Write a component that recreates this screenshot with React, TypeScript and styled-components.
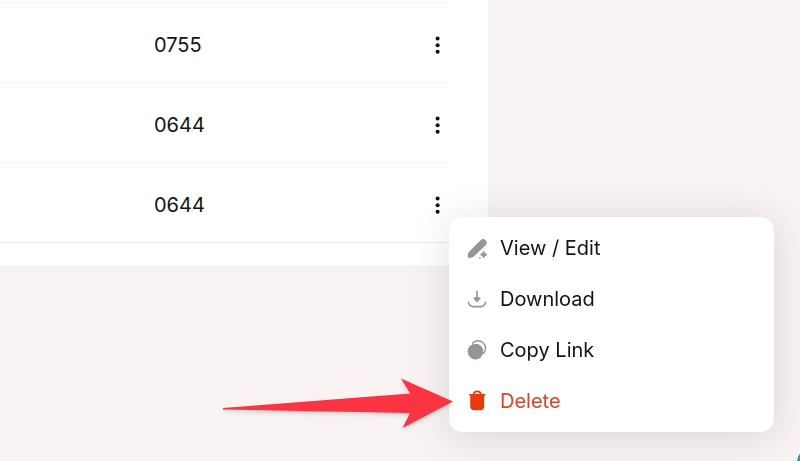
import React from "react";
import styled, { createGlobalStyle } from "styled-components";

const GlobalStyle = createGlobalStyle`
  * {
    box-sizing: border-box;
  }
  body {
    margin: 0;
    overflow: hidden;
    background: #f8f2f2;
    color: #141417;
    font-family: Inter, sans-serif;
    font-size: 20px;
    line-height: 24px;
  }
`;

const Page = styled.main`
  display: grid;
  grid-template-columns: 61fr 39fr;
  align-items: start;
  min-height: 100vh;
`;

const Panel = styled.section`
  padding: 2px 39px 22px 0;
  background: #ffffff;
`;

const FileTable = styled.table`
  width: 100%;
  border-collapse: separate;
  border-spacing: 0;
`;

const Row = styled.tr`
  height: 80px;

  &:last-child {
    height: 81px;
  }

  &:last-child td {
    border-bottom: 1px solid #efeded;
  }
`;

const PermissionCell = styled.td`
  padding: 4px 0 0 154px;
  border-top: 1px solid #f5f3f3;
`;

const ActionsCell = styled.td`
  position: relative;
  width: 48px;
  padding: 4px 0 0;
  border-top: 1px solid #f5f3f3;
`;

const KebabButton = styled.button`
  display: grid;
  place-items: center;
  width: 24px;
  height: 24px;
  margin-left: 24px;
  padding: 0;
  border: 0;
  background: none;
  color: #0c0c0e;
  cursor: pointer;
`;

const Menu = styled.div`
  position: absolute;
  z-index: 1;
  top: 54px;
  left: 100%;
  width: 325px;
  padding: 5px 0 6px;
  border-radius: 14px;
  background: #ffffff;
  box-shadow: 0 4px 40px rgba(30, 20, 25, 0.13);
`;

const MenuItem = styled.button<{ $danger?: boolean }>`
  display: flex;
  align-items: center;
  gap: 11px;
  width: 100%;
  height: 51px;
  padding: 0 16px;
  border: 0;
  background: none;
  color: ${({ $danger }) => ($danger ? "#d5462b" : "#141417")};
  font: inherit;
  text-align: left;
  cursor: pointer;

  svg {
    flex: none;
    color: ${({ $danger }) => ($danger ? "#e63a0f" : "#999394")};
  }
`;

const Pointer = styled.svg`
  position: absolute;
  right: calc(100% - 4px);
  bottom: 0;
  overflow: visible;
  pointer-events: none;
  filter: drop-shadow(0 2px 2px rgba(0, 0, 0, 0.14));
`;

const ChatButton = styled.button`
  position: fixed;
  right: -56px;
  bottom: -37px;
  width: 60px;
  height: 60px;
  padding: 0;
  border: 0;
  border-radius: 50%;
  background: #1c9cc4;
`;

const KebabIcon = () => (
  <svg width="24" height="24" viewBox="0 0 24 24" fill="currentColor" aria-hidden="true">
    <circle cx="12.6" cy="5.6" r="2" />
    <circle cx="12.6" cy="12.2" r="2" />
    <circle cx="12.6" cy="18.8" r="2" />
  </svg>
);

const EditIcon = () => (
  <svg width="24" height="24" viewBox="0 0 24 24" fill="currentColor" aria-hidden="true">
    <path d="M15.6 4.2a3.5 3.5 0 0 1 5 0 3.5 3.5 0 0 1 0 5L9.3 20.1c-1 1-2 1.6-3.4 1.7l-2 .1c-.7 0-1.2-.5-1.1-1.2l.1-2c.1-1.4.7-2.5 1.7-3.5z" />
    <path d="M18.7 15.4c.9 1.7 1.5 2.3 3.2 3.2-1.7.9-2.3 1.5-3.2 3.2-.9-1.7-1.5-2.3-3.2-3.2 1.7-.9 2.3-1.5 3.2-3.2z" stroke="currentColor" strokeWidth="1" strokeLinejoin="round" />
    <circle cx="14.9" cy="21.8" r=".9" />
  </svg>
);

const DownloadIcon = () => (
  <svg width="24" height="24" viewBox="0 0 24 24" fill="none" stroke="currentColor" strokeWidth="1.6" strokeLinecap="round" strokeLinejoin="round" aria-hidden="true">
    <path d="M12 4.2v7" />
    <path d="M9.2 11h5.6L12 14.4z" fill="currentColor" />
    <path d="M3.4 15.2c.6 3 2 4.4 4.8 4.4h7.6c2.8 0 4.2-1.4 4.8-4.4" />
  </svg>
);

const CopyIcon = () => (
  <svg width="24" height="24" viewBox="0 0 24 24" fill="currentColor" aria-hidden="true">
    <circle cx="10.5" cy="13.6" r="7.8" />
    <path d="M8.2 6A7.1 7.1 0 1 1 18.4 15.7" fill="none" stroke="#ffffff" strokeWidth="3" />
    <path d="M7.6 5.2A7.4 7.4 0 1 1 18.6 15.2" fill="none" stroke="currentColor" strokeWidth="1.5" strokeLinecap="round" />
    <circle cx="10.5" cy="13.6" r="7.6" />
  </svg>
);

const TrashIcon = () => (
  <svg width="24" height="24" viewBox="0 0 24 24" fill="currentColor" aria-hidden="true">
    <path d="M8.4 5.8c.3-2.3 1.5-3.4 3.8-3.4S15.700 3.500 16 5.800" fill="none" stroke="currentColor" strokeWidth="1.6" />
    <path d="M4.700 4.900h15c.5 0 .8.4.8.8s-.3.8-.8.8h-.5v10.400c0 2.700-1.400 4.300-3.900 4.300H9.100c-2.500 0-3.900-1.600-3.900-4.300V6.500h-.5c-.5 0-.8-.4-.8-.8s.3-.8.8-.8z" />
  </svg>
);

const ItemMenu = () => (
  <Menu role="menu" aria-label="File actions">
    <MenuItem role="menuitem"><EditIcon />View / Edit</MenuItem>
    <MenuItem role="menuitem"><DownloadIcon />Download</MenuItem>
    <MenuItem role="menuitem"><CopyIcon />Copy Link</MenuItem>
    <MenuItem role="menuitem" $danger><TrashIcon />Delete</MenuItem>
    <Pointer width="230" height="56" viewBox="0 0 230 56" aria-hidden="true">
      <path d="M0 32 187 17.5 178 2.5 230 25.5 179.5 52 187 37 0 33.5z" fill="#fb3343" />
    </Pointer>
  </Menu>
);

const rows = [
  { id: 1, permission: "0755", open: false },
  { id: 2, permission: "0644", open: false },
  { id: 3, permission: "0644", open: true },
];

export default function App() {
  return (
    <>
      <GlobalStyle />
      <Page>
        <Panel>
          <FileTable>
            <tbody>
              {rows.map(({ id, permission, open }) => (
                <Row key={id}>
                  <PermissionCell>{permission}</PermissionCell>
                  <ActionsCell>
                    <KebabButton aria-label="More actions" aria-haspopup="menu" aria-expanded={open}>
                      <KebabIcon />
                    </KebabButton>
                    {open && <ItemMenu />}
                  </ActionsCell>
                </Row>
              ))}
            </tbody>
          </FileTable>
        </Panel>
      </Page>
      <ChatButton aria-label="Open chat" />
    </>
  );
}
